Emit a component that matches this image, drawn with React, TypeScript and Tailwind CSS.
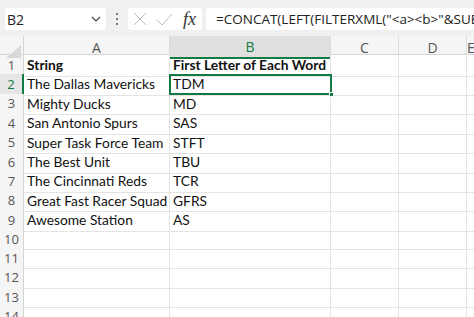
import React from 'react';

const rows: [string, string][] = [
  ['String', 'First Letter of Each Word'],
  ['The Dallas Mavericks', 'TDM'],
  ['Mighty Ducks', 'MD'],
  ['San Antonio Spurs', 'SAS'],
  ['Super Task Force Team', 'STFT'],
  ['The Best Unit', 'TBU'],
  ['The Cincinnati Reds', 'TCR'],
  ['Great Fast Racer Squad', 'GFRS'],
  ['Awesome Station', 'AS'],
  ['', ''],
  ['', ''],
  ['', ''],
  ['', ''],
  ['', ''],
];

const cols = ['A', 'B', 'C', 'D', 'E'];

const App = () => {
  return (
    <div className="w-[474px] h-[317px] overflow-hidden bg-white relative" style={{ fontFamily: 'Lato, "Noto Sans", sans-serif' }}>
      {/* Formula bar */}
      <div className="h-[36px] bg-[#f0f0f0] flex items-start pt-[8px]" style={{ fontFamily: '"Open Sans", "Noto Sans", sans-serif' }}>
        <div className="ml-[5px] w-[101px] h-[22px] bg-white rounded-[3px] flex items-center justify-between pl-[2px] pr-[5px]">
          <span className="text-[14px] text-[#222]">B2</span>
          <svg width="10" height="6" viewBox="0 0 10 6" fill="none" stroke="#444" strokeWidth="1.1">
            <path d="M1 1l4 4 4-4" />
          </svg>
        </div>
        <div className="w-[22px] h-[22px] flex flex-col items-center justify-center gap-[3px]">
          <span className="w-[2px] h-[2px] bg-[#555] rounded-full" />
          <span className="w-[2px] h-[2px] bg-[#555] rounded-full" />
          <span className="w-[2px] h-[2px] bg-[#555] rounded-full" />
        </div>
        <div className="w-[74px] h-[22px] bg-white rounded-[3px] flex items-center pl-[5px]">
          <svg width="14" height="14" viewBox="0 0 14 14" stroke="#bdbdbd" strokeWidth="1">
            <path d="M1 1l12 12M13 1L1 13" />
          </svg>
          <svg className="ml-[9px]" width="17" height="13" viewBox="0 0 17 13" fill="none" stroke="#bdbdbd" strokeWidth="1">
            <path d="M1 7l5 5L16 1" />
          </svg>
          <span className="ml-[10px] text-[18px] italic text-[#333] leading-none" style={{ fontFamily: '"Liberation Serif", serif' }}>fx</span>
        </div>
        <div className="ml-[4px] flex-1 h-[22px] bg-white rounded-l-[3px] flex items-center pl-[10px] overflow-hidden whitespace-nowrap">
          <span className="text-[13.5px] text-[#222]">=CONCAT(LEFT(FILTERXML("&lt;a&gt;&lt;b&gt;"&amp;SUBSTITUTE(A2," ","&lt;/b&gt;&lt;b&gt;")</span>
        </div>
      </div>

      {/* Column headers */}
      <div className="grid grid-cols-[24px_146px_161px_68px_68px_1fr] h-[19px] bg-[#f5f5f5] border-b border-[#d4d4d4]" style={{ fontFamily: '"Open Sans", "Noto Sans", sans-serif' }}>
        <div className="relative border-r border-[#d4d4d4]">
          <svg className="absolute right-[2px] bottom-[1px]" width="15" height="13" viewBox="0 0 15 13">
            <path d="M15 0V13H0Z" fill="#d9d9d9" />
          </svg>
        </div>
        {cols.map((c) => (
          <div
            key={c}
            className={`flex items-center justify-center text-[14px] border-r border-[#dcdcdc] ${
              c === 'B' ? 'bg-[#e0e0e0] text-[#107c41] border-b-2 border-b-[#107c41]' : 'text-[#555]'
            }`}
          >
            {c}
          </div>
        ))}
      </div>

      {/* Rows */}
      {rows.map((r, i) => (
        <div key={i} className="grid grid-cols-[24px_146px_161px_68px_68px_1fr] h-[19.4px]">
          <div
            className={`flex items-center justify-center text-[13px] border-b border-[#e4e4e4] ${
              i === 1 ? 'bg-[#e6e6e6] text-[#107c41] border-r-2 border-r-[#107c41]' : 'bg-[#f5f5f5] text-[#555] border-r border-r-[#d4d4d4]'
            }`}
            style={{ fontFamily: '"Open Sans", "Noto Sans", sans-serif' }}
          >
            {i + 1}
          </div>
          <div className={`flex items-center pl-[3px] text-[13.8px] text-[#111] whitespace-nowrap border-r border-b border-[#e4e4e4] ${i === 0 ? 'font-bold' : ''}`}>
            {r[0]}
          </div>
          <div className={`flex items-center pl-[3px] text-[13.8px] text-[#111] whitespace-nowrap border-r border-b border-[#e4e4e4] ${i === 0 ? 'font-bold' : ''}`}>
            {r[1]}
          </div>
          <div className="border-r border-b border-[#e4e4e4]" />
          <div className="border-r border-b border-[#e4e4e4]" />
          <div className="border-b border-[#e4e4e4]" />
        </div>
      ))}

      {/* Selected cell B2 */}
      <div className="absolute left-[169px] top-[74px] w-[163px] h-[21px] border-2 border-[#107c41] pointer-events-none">
        <span className="absolute -right-[4px] -bottom-[4px] w-[5px] h-[5px] bg-[#107c41] border border-white" />
      </div>
    </div>
  );
};

export default App;
